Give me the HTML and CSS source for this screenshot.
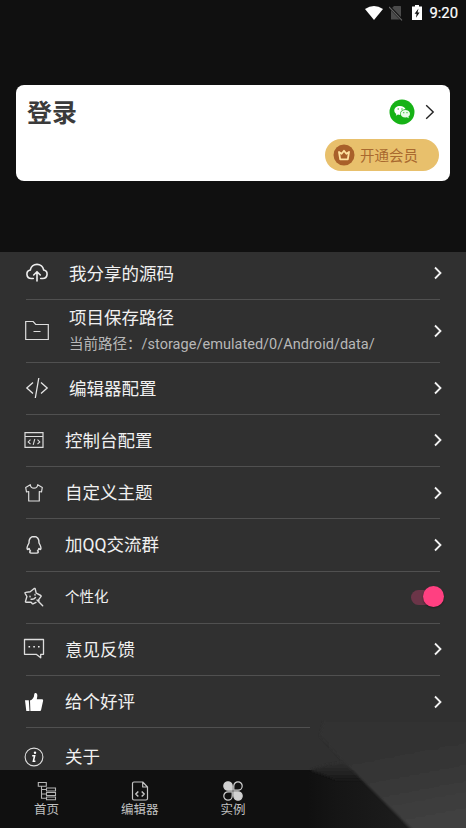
FILE: index.html
```html
<!DOCTYPE html>
<html lang="zh-CN">
<head>
<meta charset="utf-8">
<title>我的</title>
<link rel="stylesheet" href="styles.css">
</head>
<body>
<svg width="0" height="0" class="defs"><defs>
<symbol id="chev" viewBox="0 0 10 14"><path d="M2 1.5 7.5 7 2 12.5" fill="none" stroke="currentColor" stroke-width="1.8"/></symbol>
</defs></svg>
<div class="app">
  <header class="status">
    <svg class="wifi" viewBox="0 0 18 14"><path d="M0 3Q9-3 18 3L9 14Z" fill="#fff"/></svg>
    <svg class="sim" viewBox="0 0 14 16"><path d="M5 1h6.5q.5 0 .5.5v13H2V4Z" fill="#4b4b4b"/><path d="M0 1.5 13 15" stroke="#111" stroke-width="2.6"/><path d="M0 2 13 15.4" stroke="#666" stroke-width="1.1"/></svg>
    <svg class="battery" viewBox="0 0 10 15"><path d="M3 0h4v1.5h3V15H0V1.5h3Z" fill="#fff"/><path d="M6.5 3.5 2.6 8.8h2L4 12.7l3.6-5.3H5.5Z" fill="#111"/></svg>
    <span class="clock">9:20</span>
  </header>
  <section class="card">
    <div class="card-top">
      <h1>登录</h1>
      <svg class="wechat" viewBox="0 0 26 26"><circle cx="13" cy="13" r="12.5" fill="#16b216"/><path d="M11 7c-3.400 0-5.700 2-5.700 4.500 0 1.500.8 2.700 2 3.500l-.5 1.800 2.200-1.200 2.200.3C10.800 12.500 13 10.300 16.600 10.300 16 8.300 13.800 7 11 7Z" fill="#fff"/><path d="M16.300 11c-2.600 0-4.600 1.600-4.600 3.700s2 3.800 4.600 3.800l1.600-.2 1.900 1-.4-1.700c1-.7 1.600-1.700 1.600-2.900 0-2.100-2.100-3.700-4.700-3.700Z" fill="#e9fbe9"/><g fill="#16b216"><circle cx="9.200" cy="10" r=".7"/><circle cx="13" cy="10" r=".7"/><circle cx="14.800" cy="13.700" r=".6"/><circle cx="18" cy="13.700" r=".6"/></g></svg>
      <svg class="card-chev" viewBox="0 0 10 16"><path d="M1.200 1.200 8.200 8l-7 6.800" fill="none" stroke="#222" stroke-width="1.400"/></svg>
    </div>
    <div class="vip">
      <svg viewBox="0 0 22 22"><circle cx="11" cy="11" r="10.500" fill="#a9602a"/><path d="M6 8l1.200 7.300h7.600L16 8l-2.600 1.700L11 6.700 8.600 9.700Z" fill="none" stroke="#ffe2a0" stroke-width="1.800" stroke-linejoin="round"/></svg>
      <span>开通会员</span>
    </div>
  </section>
  <main class="list">
    <div class="row wide"><svg class="icon" viewBox="0 0 24 24"><g fill="none" stroke="#eee" stroke-width="1.600" stroke-linecap="round" stroke-linejoin="round"><path d="M8.300 17.500H6.200A4.300 4.300 0 0 1 5.300 9 6.800 6.800 0 0 1 18.700 9a4.300 4.300 0 0 1-.9 8.500h-2.100M12 20V11M8.700 14 12 10.700l3.300 3.300"/></g></svg><span>我分享的源码</span><svg class="chev"><use href="#chev"/></svg></div>
    <div class="row wide tall"><svg class="icon" viewBox="0 0 24 24"><path d="M.7 20.500v-18h7.500l2.500 3h12.600v15ZM8.500 12.500h7" fill="none" stroke="#ddd" stroke-width="1.200"/></svg><div class="stack"><span>项目保存路径</span><small>当前路径：<span class="path">/storage/emulated/0/Android/data/</span></small></div><svg class="chev"><use href="#chev"/></svg></div>
    <div class="row wide"><svg class="icon" viewBox="0 0 24 24"><path d="M8 6.500 1.800 12 8 17.500M16 6.500l6.200 5.500-6.200 5.500M13.800 2l-3.500 20" fill="none" stroke="#e6e6e6" stroke-width="1.300"/></svg><span>编辑器配置</span><svg class="chev"><use href="#chev"/></svg></div>
    <div class="row"><svg class="icon" viewBox="0 0 20 20"><g fill="none" stroke="#ddd"><path d="M1 2.700h18v14.600H1ZM1 6.500h18" stroke-width="1.200"/><path d="m6.500 9.700-2.300 2.200 2.300 2.200m7-4.400 2.300 2.200-2.300 2.200M10.800 9l-1.600 5.800" stroke-width="1.100"/></g></svg><span>控制台配置</span><svg class="chev"><use href="#chev"/></svg></div>
    <div class="row"><svg class="icon" viewBox="0 0 20 20"><path d="M6.300 1.700 1.700 4.500 2.500 9l2.200-.5V18h10.600V8.500l2.200.5.800-4.500-4.600-2.800C13.200 6.300 6.800 6.300 6.300 1.700Z" fill="none" stroke="#ddd" stroke-width="1.200" stroke-linejoin="round"/></svg><span>自定义主题</span><svg class="chev"><use href="#chev"/></svg></div>
    <div class="row"><svg class="icon" viewBox="0 0 20 20"><path d="M10 1.500c-3.400 0-5.200 2.500-5 6.500-1.300 2.300-2.500 5-1.700 6.200.6.700 1.400-.5 1.800-.8.300 1.300.8 1.900 1.400 2.500-1.200.7-1.200 2.200 1 2.200h5c2.200 0 2.200-1.500 1-2.200.6-.6 1.100-1.200 1.400-2.500.4.300 1.200 1.500 1.800.8.800-1.200-.4-3.900-1.700-6.200.2-4-1.600-6.500-5-6.500Z" fill="none" stroke="#e4e4e4" stroke-width="1.400" stroke-linejoin="round"/></svg><span>加QQ交流群</span><svg class="chev"><use href="#chev"/></svg></div>
    <div class="row small"><svg class="icon" viewBox="0 0 20 20"><g fill="none" stroke="#ddd" stroke-width="1.400" stroke-linejoin="round" stroke-linecap="round"><path d="m12 15.400-3 1.400q-.8.300-1-.5L7 15.200l-4.800.1q-.9 0-.7-.9l1.400-4.900-1.800-3.200q-.3-.8.500-.9l4.600-.7 4-3.200q.8-.4 1 .4l1 4.300 4.600 2.300q.8.500.1 1.100l-2.200 3 .3 1.500M13 13l5.700 5.700M6 9.300l.1.600M11 7.500l.1.600M7 12.200q2.800.6 4.500-1.700"/></g></svg><span>个性化</span><i class="toggle"></i></div>
    <div class="row"><svg class="icon bubble" viewBox="0 0 22 22"><path d="M1.500 1.500h19v14.800h-2.800v3.500l-4.500-3.500H1.500Z" fill="none" stroke="#ddd" stroke-width="1.300" stroke-linejoin="round"/><path d="M5.500 8h1.600v1.600H5.500Zm4.800 0h1.600v1.600h-1.600Zm4.700 0h1.600v1.600H15Z" fill="#eee"/></svg><span>意见反馈</span><svg class="chev"><use href="#chev"/></svg></div>
    <div class="row"><svg class="icon" viewBox="0 0 20 20"><path d="M1 8.200h3.800L5.500 19H2.300ZM6 8.500c2.500-.7 4.200-3 4.300-6.500C10.500.5 13 .8 13.300 3c.1 1.800-.3 3-.5 4.200h5c1 0 1.500.6 1.300 1.600L17.200 17.500c-.2 1-.7 1.500-1.700 1.500H6.400Z" fill="#fff"/></svg><span>给个好评</span><svg class="chev"><use href="#chev"/></svg></div>
    <div class="row last"><svg class="icon" viewBox="0 0 20 20"><circle cx="10" cy="10" r="8.900" fill="none" stroke="#ddd" stroke-width="1.100"/><circle cx="11" cy="5.700" r="1.200" fill="#fff"/><path d="M8.200 8.700h2.400l-1.200 5.500h2" fill="none" stroke="#fff" stroke-width="1.600"/></svg><span>关于</span></div>
  </main>
  <nav class="tabs">
    <div class="tab"><svg viewBox="0 0 20 20"><g fill="none" stroke="#b5b5b5" stroke-width="1.100"><path d="M1.300 1.500h8v3.800h-8ZM4.500 5.300v12h5M4.500 8.500h5M4.500 13h5M9.500 7h9v3h-9ZM9.500 11.500h9v3h-9ZM9.500 16h9v2.800h-9Z"/></g></svg><span>首页</span></div>
    <div class="tab"><svg viewBox="0 0 20 20"><g fill="none" stroke="#c4c4c4" stroke-width="1.200" stroke-linejoin="round"><path d="M12.700 1H4Q2.500 1 2.500 2.500v15Q2.500 19 4 19h12q1.500 0 1.500-1.500V6ZM12.700 1v5h4.800"/><path d="M8.300 10.500 5.800 13l2.500 2.500m3.400-5 2.500 2.500-2.500 2.500" stroke-width="1.500"/></g></svg><span>编辑器</span></div>
    <div class="tab"><svg viewBox="0 0 20 20"><g stroke="#d0d0d0" stroke-width="1.200"><path d="M9.200 9.200H5A4.200 4.200 0 1 1 9.200 5Z" fill="#d0d0d0"/><path d="M10.800 9.200V5A4.200 4.200 0 1 1 15 9.200Z" fill="none"/><path d="M9.200 10.800V15A4.200 4.200 0 1 1 5 10.800Z" fill="none"/><path d="M10.800 10.800H15A4.200 4.200 0 1 1 10.800 15Z" fill="#d0d0d0"/></g></svg><span>实例</span></div>
    <div class="tab"></div><div class="tab"></div>
  </nav>
  <svg class="shade" viewBox="0 0 166 108">
    <defs>
      <linearGradient id="top" gradientUnits="userSpaceOnUse" x1="80" y1="4" x2="100" y2="108"><stop offset="0" stop-color="#303030"/><stop offset=".45" stop-color="#353535"/><stop offset="1" stop-color="#404040"/></linearGradient>
      <linearGradient id="low" x1="0" y1="0" x2="1" y2="0"><stop offset="0" stop-color="#101010"/><stop offset=".25" stop-color="#151515"/><stop offset="1" stop-color="#1e1e1e"/></linearGradient>
      <linearGradient id="edge" gradientUnits="userSpaceOnUse" x1="0" y1="42" x2="0" y2="60"><stop offset="0" stop-color="#313131"/><stop offset="1" stop-color="#181818"/></linearGradient>
      <filter id="soft"><feGaussianBlur stdDeviation=".8"/></filter>
    </defs>
    <path d="M8 50H120V108H8Z" fill="url(#low)"/>
    <path d="M10 6H166V50H10Z" fill="#303030"/>
    <path d="M10 50 26 45 43 42 66 60H36Z" fill="url(#edge)" filter="url(#soft)"/>
    <path d="M20 16 42 40 114 112H176V0H24Z" fill="url(#top)" filter="url(#soft)"/>
  </svg>
</div>
</body>
</html>
```
FILE: styles.css
```css
* { box-sizing: border-box; }
body { margin: 0; background: #111; font-family: Roboto, "Noto Sans CJK SC", sans-serif; }
.defs { position: absolute; }
.app { position: relative; width: 466px; height: 828px; overflow: hidden; display: flex; flex-direction: column; background: #101010; color: #f0f0f0; }
.status { height: 85px; padding: 5px 8px 0 0; display: flex; justify-content: flex-end; align-items: flex-start; }
.wifi { width: 18px; height: 14px; margin: 1px 6px 0 0; }
.sim { width: 14px; height: 16px; margin-right: 9px; }
.battery { width: 10px; height: 15px; margin-right: 7px; }
.clock { font-size: 14.8px; line-height: 17px; color: #fff; -webkit-text-stroke: .2px #fff; }
.card { height: 96px; margin: 0 16px; padding: 9px 11px 0; border-radius: 8px; background: #fff; }
.card-top { display: flex; align-items: center; height: 36px; }
h1 { margin: 0 auto 0 0; padding-top: 3px; font-size: 25px; line-height: 36px; font-weight: 700; color: #3b3b3b; }
.wechat { width: 26px; height: 26px; margin-right: 10px; }
.card-chev { width: 10px; height: 16px; margin-right: 4px; }
.vip { width: 114px; height: 32px; margin: 9px 0 0 auto; padding-left: 8px; border-radius: 16px; background: #e8c06c; display: flex; align-items: center; gap: 5px; font-size: 14.500px; color: #a9692f; }
.vip svg { width: 22px; height: 22px; }
.vip span { padding-bottom: 1px; }
.list { height: 518px; margin-top: 71px; padding: 0 26px; overflow: hidden; background: #303030; flex: none; }
.row { display: flex; align-items: center; height: 52.250px; border-bottom: 1px solid #505050; font-size: 17.500px; line-height: 26px; }
.row > span { padding-top: 1px; }
.row:first-child { margin-top: -4.300px; }
.icon { width: 20px; height: 20px; margin: 0 21px 0 -2px; flex: none; }
.wide .icon { width: 24px; height: 24px; margin: 0 20px 0 -1px; }
.icon.bubble { width: 22px; height: 22px; margin: 0 20px 0 -3px; }
.tall { height: 62.600px; }
.stack { display: flex; flex-direction: column; padding-top: 2px; }
small { font-size: 14.500px; line-height: 26px; padding-top: 1px; color: #b8b8b8; }
.path { letter-spacing: .03px; }
.chev { width: 10px; height: 14px; margin: 0 -3px 0 auto; color: #f2f2f2; flex: none; }
.small { font-size: 14.500px; }
.toggle { position: relative; width: 33px; height: 22px; margin: 0 -4px 0 auto; }
.toggle::before { content: ""; position: absolute; left: 0; top: 3.500px; width: 30px; height: 15px; border-radius: 8px; background: #6b3548; }
.toggle::after { content: ""; position: absolute; right: 0; top: 0; width: 21px; height: 21px; border-radius: 50%; background: #ff4081; box-shadow: 0 1px 2px #0006; }
.last { height: 57px; border: 0; }
.last > span { padding-top: 0; }
.tabs { flex: 1; display: flex; background: #101010; }
.tab { flex: 1; display: flex; flex-direction: column; align-items: center; padding-top: 11px; font-size: 12.500px; line-height: 16px; color: #c0c0c0; }
.tab svg { width: 20px; height: 20px; margin-bottom: 1px; }
.shade { position: absolute; right: 0; bottom: 0; width: 166px; height: 108px; }
```
